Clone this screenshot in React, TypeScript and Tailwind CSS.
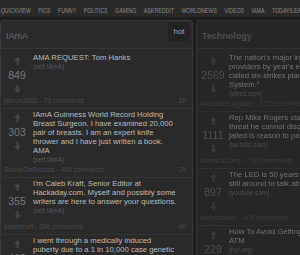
import React from "react";

type Theme = {
  title: string;
  score: string;
  arrow: string;
  domain: string;
  meta: string;
  sep: string;
};

const LEFT: Theme = {
  title: "text-[#bcbcbc]",
  score: "text-[#777777]",
  arrow: "fill-[#474747]",
  domain: "text-[#595959]",
  meta: "text-[#4a4a4a]",
  sep: "border-[#343434]",
};

const RIGHT: Theme = {
  title: "text-[#747474]",
  score: "text-[#4e4e4e]",
  arrow: "fill-[#3a3a3a]",
  domain: "text-[#4e4e4e]",
  meta: "text-[#3d3d3d]",
  sep: "border-[#303030]",
};

function Arrow({ down, cls }: { down?: boolean; cls: string }) {
  return (
    <svg width="7" height="8" viewBox="0 0 7 8" className={down ? "rotate-180" : ""}>
      <path d="M3.5 0L7 3.7H4.6V8H2.4V3.7H0Z" className={cls} />
    </svg>
  );
}

type ItemData = {
  score: string;
  lines: string[];
  domain: string;
  author: string;
  comments: string;
  time?: string;
};

function Item({ d, t }: { d: ItemData; t: Theme }) {
  return (
    <div className={`border-b ${t.sep} pt-[1px] pb-[2px]`}>
      <div className="flex items-start">
        <div className="w-[32px] shrink-0 mt-[1px] flex flex-col items-center">
          <div className="h-[14px] flex items-center justify-center">
            <Arrow cls={t.arrow} />
          </div>
          <div className={`h-[14px] leading-[14px] text-[10.5px] ${t.score}`}>{d.score}</div>
          <div className="h-[14px] flex items-center justify-center">
            <Arrow down cls={t.arrow} />
          </div>
        </div>
        <div className="min-w-0 flex-1">
          <div className={`text-[7.7px] leading-[9px] ${t.title}`}>
            {d.lines.map((l, i) => (
              <div key={i} className="whitespace-nowrap">
                {l}
              </div>
            ))}
          </div>
          <div className={`text-[6.3px] leading-[10px] ${t.domain}`}>{d.domain}</div>
        </div>
      </div>
      <div className={`flex justify-between pl-[3px] pr-[6px] text-[6.7px] leading-[10px] whitespace-nowrap ${t.meta}`}>
        <span>
          {d.author} - {d.comments} comments
        </span>
        <span>{d.time}</span>
      </div>
    </div>
  );
}

const leftItems: ItemData[] = [
  {
    score: "849",
    lines: ["AMA REQUEST: Tom Hanks"],
    domain: "(self.IAmA)",
    author: "jabron2002",
    comments: "79",
    time: "1h",
  },
  {
    score: "303",
    lines: [
      "IAmA Guinness World Record Holding",
      "Breast Surgeon. I have examined 20,000",
      "pair of breasts. I am an expert knife",
      "thrower and I have just written a book.",
      "AMA",
    ],
    domain: "(self.IAmA)",
    author: "ScoopOnBreasts",
    comments: "406",
    time: "2h",
  },
  {
    score: "355",
    lines: [
      "I'm Caleb Kraft, Senior Editor at",
      "Hackaday.com. Myself and possibly some",
      "writers are here to answer your questions.",
    ],
    domain: "(self.IAmA)",
    author: "calebkraft",
    comments: "256",
    time: "4h",
  },
  {
    score: "412",
    lines: [
      "I went through a medically induced",
      "puberty due to a 1 in 10,000 case genetic",
      "disorder. AMA",
    ],
    domain: "(self.IAmA)",
    author: "puberty_throwaway",
    comments: "188",
    time: "5h",
  },
];

const rightItems: ItemData[] = [
  {
    score: "2569",
    lines: [
      "The nation's major internet service",
      "providers by year's end will launch the so-",
      "called six-strikes plan, or Copyright Alert",
      "System.\"",
    ],
    domain: "(wired.com)",
    author: "AcousticBoogaloo",
    comments: "1378",
  },
  {
    score: "1111",
    lines: [
      "Rep Mike Rogers claims there's a cyber",
      "threat he cannot disclose, and that being",
      "jailed is reason to pass CISPA",
    ],
    domain: "(techdirt.com)",
    author: "AmericanDerp",
    comments: "198",
  },
  {
    score: "897",
    lines: ["The LED is 50 years old and its inventor is", "still around to talk about it"],
    domain: "(youtube.com)",
    author: "kirbysdownb",
    comments: "105",
  },
  {
    score: "229",
    lines: ["How To Avoid Getting Scammed At The", "ATM"],
    domain: "(npr.org)",
    author: "nprnews",
    comments: "64",
  },
];

const nav = [
  "QUICKVIEW",
  "PICS",
  "FUNNY",
  "POLITICS",
  "GAMING",
  "ASKREDDIT",
  "WORLDNEWS",
  "VIDEOS",
  "IAMA",
  "TODAYILEARNED",
];

export default function App() {
  return (
    <div
      className="w-[300px] h-[255px] overflow-hidden bg-[#1e1e1e]"
      style={{ fontFamily: "'Liberation Sans', Arial, sans-serif" }}
    >
      <div className="h-[18px] bg-[#292929] border-b border-[#1b1b1b] flex items-end pb-[2px] overflow-hidden">
        <div className="flex gap-[10px] origin-left scale-x-[0.75] whitespace-nowrap pl-[1px] text-[7px] leading-[8px] text-[#8a8a8a]">
          {nav.map((n) => (
            <span key={n}>{n}</span>
          ))}
        </div>
      </div>
      <div className="flex gap-[3px] pt-[2px]">
        <div className="w-[193px] shrink-0 h-[240px] rounded-t-[3px] border border-[#383838] bg-[#2a2a2a]">
          <div className="h-[28px] border-b border-[#363636] flex items-start justify-between">
            <span className="pl-[5px] pt-[10px] text-[9px] leading-[11px] text-[#6c6c6c]">IAmA</span>
            <div className="mt-[1px] mr-[2px] h-[19px] w-[22px] rounded-[2px] bg-[#232323] flex items-center justify-center text-[8px] text-[#a4a4a4]">
              hot
            </div>
          </div>
          <div className="pt-[3px]">
            {leftItems.map((d, i) => (
              <Item key={i} d={d} t={LEFT} />
            ))}
          </div>
        </div>
        <div className="w-[150px] shrink-0 h-[240px] rounded-t-[3px] border border-[#333333] bg-[#262626] blur-[0.35px]">
          <div className="h-[28px] border-b border-[#313131] flex items-start">
            <span className="pl-[5px] pt-[10px] text-[9px] leading-[11px] font-bold text-[#4e4e4e]">
              Technology
            </span>
          </div>
          <div className="pt-[3px]">
            {rightItems.map((d, i) => (
              <Item key={i} d={d} t={RIGHT} />
            ))}
          </div>
        </div>
      </div>
    </div>
  );
}
